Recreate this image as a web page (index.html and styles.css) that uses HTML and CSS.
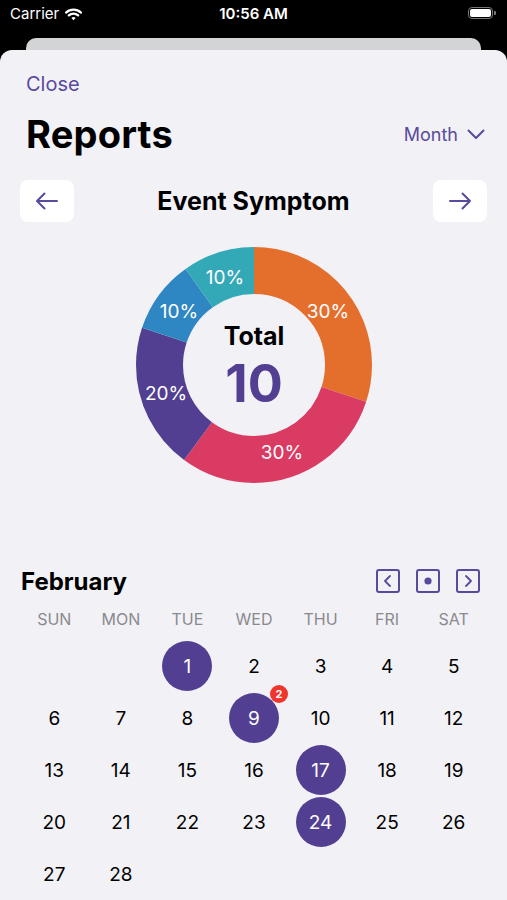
FILE: index.html
```html
<!DOCTYPE html>
<html lang="en">

<head>
    <meta charset="UTF-8">
    <meta name="viewport" content="width=device-width, initial-scale=1.0">
    <title>Reports</title>

    <link rel="stylesheet" href="styles.css">
</head>

<body>
    <div class="status-bar">
        <div class="carrier">
            Carrier
            <svg class="wifi" width="17" height="13" viewBox="0 0 17 13">
                <path d="M1 4.6 A11 11 0 0 1 16 4.6" fill="none" stroke="#fff" stroke-width="2.2" stroke-linecap="round"/>
                <path d="M3.8 7.4 A7 7 0 0 1 13.2 7.4" fill="none" stroke="#fff" stroke-width="2.2" stroke-linecap="round"/>
                <path d="M6.4 10 L8.5 12.3 L10.6 10 A3 3 0 0 0 6.4 10 Z" fill="#fff"/>
            </svg>
        </div>
        <div class="time">10:56 AM</div>
        <div class="battery">
            <span class="battery-body"><span class="battery-fill"></span></span>
            <span class="battery-tip"></span>
        </div>
    </div>
    <div class="back-card"></div>

    <div class="sheet">
        <a class="close">Close</a>

        <div class="heading-row">
            <h1>Reports</h1>
            <div class="range">
                Month
                <svg width="18" height="11" viewBox="0 0 18 11">
                    <path d="M1.5 1.5 L9 9 L16.5 1.5" fill="none" stroke="#5a4a9c" stroke-width="2" stroke-linecap="round" stroke-linejoin="round"/>
                </svg>
            </div>
        </div>

        <div class="chart-nav">
            <button class="arrow-btn">
                <svg width="24" height="18" viewBox="0 0 24 18">
                    <path d="M22 9 H2 M9.5 1.5 L2 9 L9.5 16.5" fill="none" stroke="#5a4a9c" stroke-width="2" stroke-linecap="round" stroke-linejoin="round"/>
                </svg>
            </button>
            <h2>Event Symptom</h2>
            <button class="arrow-btn">
                <svg width="24" height="18" viewBox="0 0 24 18">
                    <path d="M2 9 H22 M14.5 1.5 L22 9 L14.5 16.5" fill="none" stroke="#5a4a9c" stroke-width="2" stroke-linecap="round" stroke-linejoin="round"/>
                </svg>
            </button>
        </div>

        <div class="donut">
            <svg width="240" height="240" viewBox="0 0 240 240">
                <g transform="rotate(-90 120 120)" fill="none" stroke-width="47">
                    <circle cx="120" cy="120" r="94.5" stroke="#e46f2d" stroke-dasharray="178.13 593.76" stroke-dashoffset="0"/>
                    <circle cx="120" cy="120" r="94.5" stroke="#d93b63" stroke-dasharray="178.13 593.76" stroke-dashoffset="-178.13"/>
                    <circle cx="120" cy="120" r="94.5" stroke="#533f91" stroke-dasharray="118.75 593.76" stroke-dashoffset="-356.26"/>
                    <circle cx="120" cy="120" r="94.5" stroke="#2e87c3" stroke-dasharray="59.38 593.76" stroke-dashoffset="-475.01"/>
                    <circle cx="120" cy="120" r="94.5" stroke="#33a9b7" stroke-dasharray="59.38 593.76" stroke-dashoffset="-534.39"/>
                </g>
                <g class="slice-labels" text-anchor="middle" dominant-baseline="central">
                    <text x="194" y="66">30%</text>
                    <text x="148" y="207">30%</text>
                    <text x="32" y="148">20%</text>
                    <text x="45" y="66">10%</text>
                    <text x="91" y="32">10%</text>
                </g>
                <text class="total-label" x="120" y="91" text-anchor="middle" dominant-baseline="central">Total</text>
                <text class="total-value" x="120" y="138" text-anchor="middle" dominant-baseline="central">10</text>
            </svg>
        </div>

        <div class="calendar">
            <div class="month-row">
                <h3>February</h3>
                <div class="month-nav">
                    <span class="nav-box">
                        <svg width="20" height="20" viewBox="0 0 20 20">
                            <path d="M12 5 L7 10 L12 15" fill="none" stroke="#5a4a9c" stroke-width="1.8" stroke-linecap="round" stroke-linejoin="round"/>
                        </svg>
                    </span>
                    <span class="nav-box">
                        <svg width="20" height="20" viewBox="0 0 20 20">
                            <circle cx="10" cy="10" r="3.6" fill="#5a4a9c"/>
                        </svg>
                    </span>
                    <span class="nav-box">
                        <svg width="20" height="20" viewBox="0 0 20 20">
                            <path d="M8 5 L13 10 L8 15" fill="none" stroke="#5a4a9c" stroke-width="1.8" stroke-linecap="round" stroke-linejoin="round"/>
                        </svg>
                    </span>
                </div>
            </div>

            <div class="weekdays">
                <span>SUN</span><span>MON</span><span>TUE</span><span>WED</span><span>THU</span><span>FRI</span><span>SAT</span>
            </div>

            <div class="days">
                <span class="day empty"></span>
                <span class="day empty"></span>
                <span class="day"><span class="num selected">1</span></span>
                <span class="day"><span class="num">2</span></span>
                <span class="day"><span class="num">3</span></span>
                <span class="day"><span class="num">4</span></span>
                <span class="day"><span class="num">5</span></span>

                <span class="day"><span class="num">6</span></span>
                <span class="day"><span class="num">7</span></span>
                <span class="day"><span class="num">8</span></span>
                <span class="day"><span class="num selected">9<span class="badge">2</span></span></span>
                <span class="day"><span class="num">10</span></span>
                <span class="day"><span class="num">11</span></span>
                <span class="day"><span class="num">12</span></span>

                <span class="day"><span class="num">13</span></span>
                <span class="day"><span class="num">14</span></span>
                <span class="day"><span class="num">15</span></span>
                <span class="day"><span class="num">16</span></span>
                <span class="day"><span class="num selected">17</span></span>
                <span class="day"><span class="num">18</span></span>
                <span class="day"><span class="num">19</span></span>

                <span class="day"><span class="num">20</span></span>
                <span class="day"><span class="num">21</span></span>
                <span class="day"><span class="num">22</span></span>
                <span class="day"><span class="num">23</span></span>
                <span class="day"><span class="num selected">24</span></span>
                <span class="day"><span class="num">25</span></span>
                <span class="day"><span class="num">26</span></span>

                <span class="day"><span class="num">27</span></span>
                <span class="day"><span class="num">28</span></span>
            </div>
        </div>
    </div>
</body>

</html>
```

FILE: styles.css
```css
* {
    box-sizing: border-box;
}

body {
    margin: 0;
    background-color: #000;
    font-family: Inter, "Noto Sans", sans-serif;
    height: 900px;
    overflow: hidden;
}

.status-bar {
    height: 38px;
    display: flex;
    align-items: flex-start;
    justify-content: space-between;
    padding: 5px 10px 0 10px;
    color: #fff;
    font-size: 15px;
    position: relative;
}

.carrier {
    display: flex;
    align-items: center;
    gap: 6px;
    line-height: 18px;
}

.time {
    position: absolute;
    left: 0;
    right: 0;
    top: 5px;
    text-align: center;
    font-weight: 600;
    line-height: 18px;
}

.battery {
    display: flex;
    align-items: center;
    margin-top: 2px;
    margin-right: 1px;
}

.battery-body {
    width: 25px;
    height: 12px;
    border: 1.5px solid #777;
    border-radius: 4px;
    padding: 1px;
    display: block;
}

.battery-fill {
    display: block;
    width: 100%;
    height: 100%;
    background-color: #fff;
    border-radius: 2px;
}

.battery-tip {
    width: 2px;
    height: 4px;
    background-color: #777;
    border-radius: 0 1px 1px 0;
    margin-left: 1px;
}

.back-card {
    height: 12px;
    margin: 0 26px;
    background-color: #d3d4d6;
    border-radius: 10px 10px 0 0;
}

.sheet {
    background-color: #f2f1f6;
    border-radius: 12px 12px 0 0;
    height: 850px;
    padding-top: 22px;
}

.close {
    display: block;
    margin-left: 26px;
    font-size: 20px;
    line-height: 24px;
    color: #5a4a9c;
}

.heading-row {
    display: flex;
    align-items: center;
    justify-content: space-between;
    margin-top: 16px;
    padding: 0 22px 0 26px;
    height: 44px;
}

h1 {
    margin: 0;
    font-size: 38px;
    font-weight: 700;
    color: #000;
    letter-spacing: 0.2px;
}

.range {
    display: flex;
    align-items: center;
    gap: 9px;
    font-size: 18px;
    color: #5a4a9c;
}

.chart-nav {
    display: flex;
    align-items: center;
    justify-content: space-between;
    margin-top: 24px;
    padding: 0 20px;
    height: 42px;
}

.chart-nav h2 {
    margin: 0;
    font-size: 25px;
    font-weight: 700;
    color: #000;
}

.arrow-btn {
    width: 54px;
    height: 42px;
    border: none;
    background-color: #fff;
    border-radius: 8px;
    display: flex;
    align-items: center;
    justify-content: center;
    padding: 0;
}

.donut {
    display: flex;
    justify-content: center;
    margin-top: 23px;
    height: 240px;
}

.slice-labels text {
    fill: #fff;
    font-size: 19px;
    font-family: Inter, sans-serif;
}

.total-label {
    font-size: 25px;
    font-weight: 700;
    fill: #000;
}

.total-value {
    font-size: 52px;
    font-weight: 700;
    fill: #533f91;
}

.calendar {
    margin-top: 81px;
    padding: 0 20px 0 21px;
}

.month-row {
    display: flex;
    align-items: center;
    justify-content: space-between;
    height: 30px;
}

.month-row h3 {
    margin: 0;
    font-size: 24px;
    font-weight: 700;
    color: #000;
}

.month-nav {
    display: flex;
    gap: 16px;
    margin-right: 7px;
}

.nav-box {
    width: 24px;
    height: 24px;
    border: 2px solid #5a4a9c;
    border-radius: 3px;
    display: flex;
    align-items: center;
    justify-content: center;
}

.weekdays {
    display: grid;
    grid-template-columns: repeat(7, 1fr);
    margin-top: 13px;
    font-size: 16px;
    line-height: 20px;
    color: #8a8a8e;
    text-align: center;
}

.days {
    display: grid;
    grid-template-columns: repeat(7, 1fr);
    grid-auto-rows: 52px;
    margin-top: 12px;
}

.day {
    display: flex;
    align-items: flex-start;
    justify-content: center;
}

.num {
    position: relative;
    width: 50px;
    height: 50px;
    border-radius: 50%;
    display: flex;
    align-items: center;
    justify-content: center;
    font-size: 19px;
    color: #000;
}

.num.selected {
    background-color: #533f91;
    color: #fff;
}

.badge {
    position: absolute;
    top: -8px;
    right: -9px;
    width: 18px;
    height: 18px;
    border-radius: 50%;
    background-color: #f0352c;
    color: #fff;
    font-size: 11px;
    font-weight: 700;
    display: flex;
    align-items: center;
    justify-content: center;
}
```
